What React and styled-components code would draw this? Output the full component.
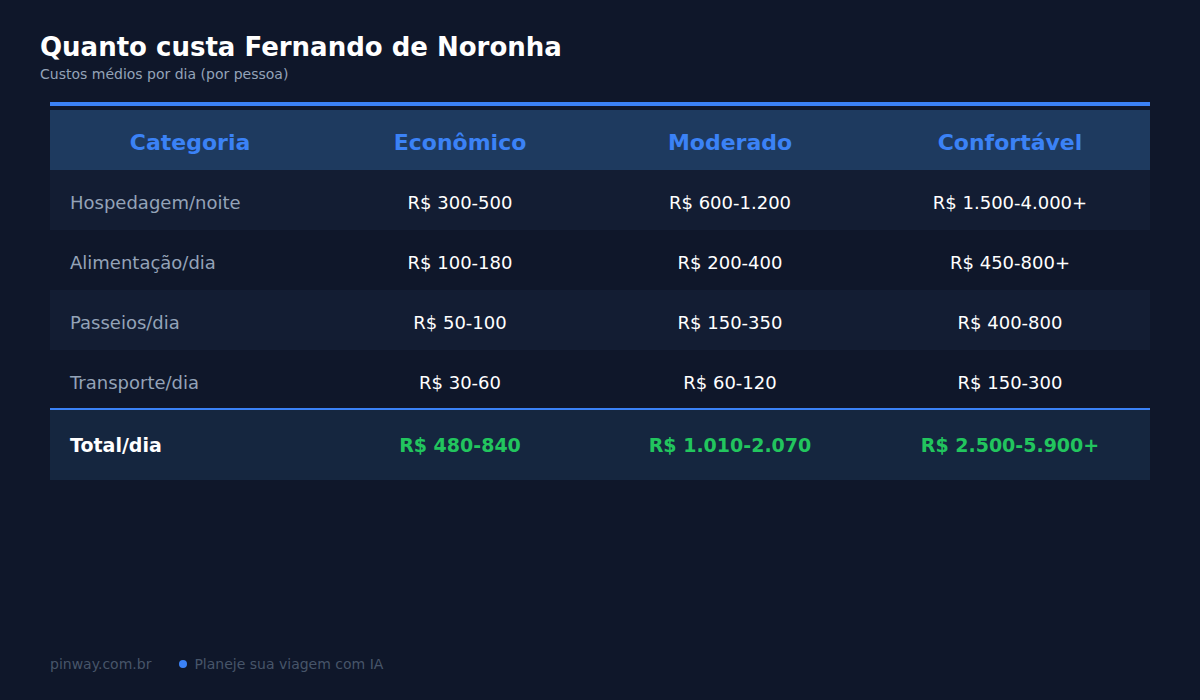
import React from 'react'
import styled, { createGlobalStyle } from 'styled-components'

const GlobalStyle = createGlobalStyle`
  html, body {
    margin: 0;
    padding: 0;
    background: #0f172a;
  }
  body {
    font-family: "DejaVu Sans", "Liberation Sans", sans-serif;
  }
`

const rows = [
  { label: 'Hospedagem/noite', values: ['R$ 300-500', 'R$ 600-1.200', 'R$ 1.500-4.000+'] },
  { label: 'Alimentação/dia', values: ['R$ 100-180', 'R$ 200-400', 'R$ 450-800+'] },
  { label: 'Passeios/dia', values: ['R$ 50-100', 'R$ 150-350', 'R$ 400-800'] },
  { label: 'Transporte/dia', values: ['R$ 30-60', 'R$ 60-120', 'R$ 150-300'] },
]

const totals = ['R$ 480-840', 'R$ 1.010-2.070', 'R$ 2.500-5.900+']

const App = () => {
  return (
    <Page>
      <GlobalStyle />
      <Title>Quanto custa Fernando de Noronha</Title>
      <Subtitle>Custos médios por dia (por pessoa)</Subtitle>

      <Table>
        <TopBar />
        <HeaderRow>
          <HeadCell>Categoria</HeadCell>
          <HeadCell>Econômico</HeadCell>
          <HeadCell>Moderado</HeadCell>
          <HeadCell>Confortável</HeadCell>
        </HeaderRow>
        {rows.map((r, i) => (
          <Row key={r.label} $striped={i % 2 === 0}>
            <LabelCell>{r.label}</LabelCell>
            {r.values.map(v => (
              <ValueCell key={v}>{v}</ValueCell>
            ))}
          </Row>
        ))}
        <TotalRow>
          <TotalLabel>Total/dia</TotalLabel>
          {totals.map(t => (
            <TotalValue key={t}>{t}</TotalValue>
          ))}
        </TotalRow>
      </Table>

      <Footer>
        <Site>pinway.com.br</Site>
        <Tagline>
          <Dot />
          Planeje sua viagem com IA
        </Tagline>
      </Footer>
    </Page>
  )
}

export default App

const Page = styled.div`
  width: 1200px;
  height: 700px;
  box-sizing: border-box;
  padding: 32px 40px 0 40px;
  display: flex;
  flex-direction: column;
  background: #0f172a;
  overflow: hidden;
`

const Title = styled.h1`
  margin: 0;
  font-size: 26px;
  line-height: 30px;
  font-weight: 700;
  color: #ffffff;
`

const Subtitle = styled.p`
  margin: 4px 0 0 0;
  font-size: 14px;
  line-height: 17px;
  color: #94a3b8;
`

const Table = styled.div`
  margin: 19px 10px 0 10px;
  display: flex;
  flex-direction: column;
`

const TopBar = styled.div`
  height: 4px;
  background: #3b82f6;
  margin-bottom: 4px;
`

const grid = `
  display: grid;
  grid-template-columns: 280px 260px 280px 280px;
  align-items: center;
`

const HeaderRow = styled.div`
  ${grid}
  height: 60px;
  background: #1e3a5f;
`

const HeadCell = styled.div`
  text-align: center;
  font-size: 22px;
  font-weight: 700;
  color: #3b82f6;
  padding-top: 4px;
`

const Row = styled.div`
  ${grid}
  height: 60px;
  background: ${p => (p.$striped ? '#131d33' : '#0f172a')};
`

const LabelCell = styled.div`
  padding-left: 20px;
  padding-top: 4px;
  font-size: 18px;
  color: #94a3b8;
`

const ValueCell = styled.div`
  text-align: center;
  padding-top: 4px;
  font-size: 18px;
  color: #ffffff;
`

const TotalRow = styled.div`
  ${grid}
  height: 70px;
  margin-top: -2px;
  border-top: 2px solid #3b82f6;
  background: #15263f;
`

const TotalLabel = styled.div`
  padding-left: 20px;
  font-size: 19px;
  font-weight: 700;
  color: #ffffff;
`

const TotalValue = styled.div`
  text-align: center;
  font-size: 19px;
  font-weight: 700;
  color: #22c55e;
`

const Footer = styled.div`
  margin-top: auto;
  margin-bottom: 28px;
  padding-left: 10px;
  display: flex;
  align-items: center;
  gap: 28px;
  font-size: 14px;
  color: #475569;
`

const Site = styled.span``

const Tagline = styled.span`
  display: flex;
  align-items: center;
  gap: 7px;
`

const Dot = styled.span`
  width: 8px;
  height: 8px;
  border-radius: 50%;
  background: #3b82f6;
`
